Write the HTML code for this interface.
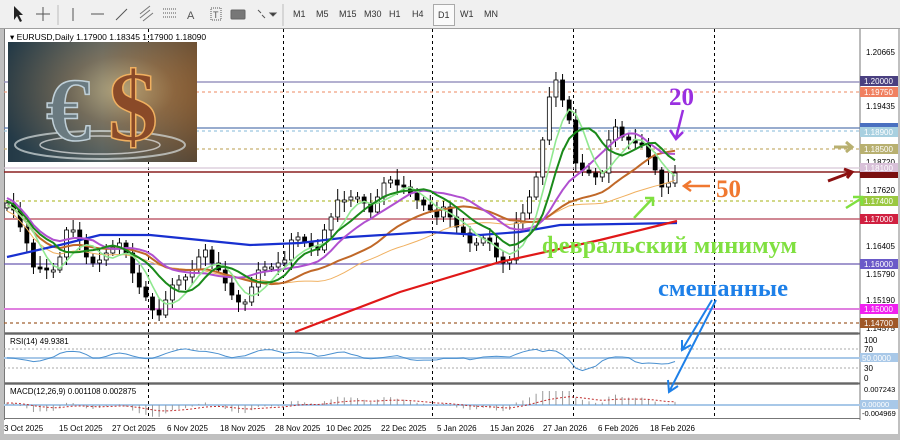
<!DOCTYPE html>
<html><head><meta charset="utf-8"><style>
body{margin:0;width:900px;height:440px;overflow:hidden;background:#c0c0c0;font-family:"Liberation Sans",sans-serif}
#tb{position:absolute;left:0;top:0;width:900px;height:28px;background:#f0f0f0;border-bottom:1px solid #a0a0a0}
.tf{position:absolute;top:9px;font-size:9px;color:#333}
svg{position:absolute;left:0;top:0}
</style></head><body>
<div id="tb">
<span class="tf" style="left:293px">M1</span><span class="tf" style="left:316px">M5</span><span class="tf" style="left:339px">M15</span><span class="tf" style="left:364px">M30</span><span class="tf" style="left:389px">H1</span><span class="tf" style="left:412px">H4</span>
<span class="tf" style="left:433px;top:4px;padding:5px 4px;border:1px solid #aaa;background:#fafafa">D1</span>
<span class="tf" style="left:460px">W1</span><span class="tf" style="left:484px">MN</span>
</div>
<svg width="900" height="440" id="s" xmlns="http://www.w3.org/2000/svg">
<defs>
<radialGradient id="g1" cx="0.6" cy="0.4" r="0.7"><stop offset="0" stop-color="#f5c070"/><stop offset="0.4" stop-color="#8a5a30"/><stop offset="1" stop-color="#1c2630"/></radialGradient>
<linearGradient id="g2" x1="0" x2="1"><stop offset="0" stop-color="#2a4c5c"/><stop offset="0.5" stop-color="#6a8a90"/><stop offset="1" stop-color="#9a6a38"/></linearGradient>
</defs>
<g stroke="#555" fill="none" stroke-width="1">
<path d="M14 6 L14 20 L17 16 L20 22 L22 21 L19 15 L23 15 Z" fill="#222" stroke="none"/>
<path d="M43 7v14M36 14h14"/>
<path d="M58 5v20" stroke="#bbb"/>
<path d="M73 8v13"/><path d="M91 14h13"/><path d="M116 20l11-11"/>
<path d="M140 18l10-8M140 14l10-8M143 21l10-8" stroke="#777"/>
<path d="M163 9h13M163 13h13M163 17h13" stroke-dasharray="1 1"/>
<path d="M211 8h10v12h-10z" stroke-dasharray="1 1"/>
<rect x="231" y="10" width="14" height="9" fill="#777" stroke="#666" rx="1"/>
<path d="M258 10l3 3M262 15l3 3"/><path d="M270 13l3 3l3-3z" fill="#333"/>
<path d="M283 4v22" stroke="#bbb"/>
</g>
<text x="187" y="19" font-size="11" fill="#555">A</text>
<text x="213" y="18" font-size="9" fill="#555">T</text>
<rect x="4" y="29" width="854" height="303" fill="#fff"/>
<rect x="858" y="29" width="40" height="405" fill="#fff"/>
<rect x="4" y="335" width="854" height="47" fill="#fff"/>
<rect x="4" y="385" width="854" height="33" fill="#fff"/>
<rect x="4" y="418" width="854" height="16" fill="#fff"/>
<line x1="860" y1="29" x2="860" y2="420" stroke="#777"/>
<line x1="4" y1="333.5" x2="860" y2="333.5" stroke="#666" stroke-width="2"/>
<line x1="4" y1="383.5" x2="860" y2="383.5" stroke="#666" stroke-width="2"/>
<line x1="4" y1="418.5" x2="860" y2="418.5" stroke="#777"/>
<line x1="4.5" y1="29" x2="4.5" y2="420" stroke="#777"/>
<rect x="0" y="434" width="900" height="6" fill="#c0c0c0"/>
<g stroke="#000" stroke-dasharray="3 3" stroke-width="1">
<path d="M148.5 29V418M283.5 29V418M432.5 29V418M573.5 29V418M714.5 29V418"/>
</g>
<g stroke-width="1.2">
<line x1="4" x2="860" y1="82" y2="82" stroke="#9a96c0" stroke-width="1.6"/>
<line x1="4" x2="860" y1="92" y2="92" stroke="#f0a080" stroke-dasharray="3 3"/>
<line x1="4" x2="860" y1="128" y2="128" stroke="#5a7ab0"/>
<line x1="4" x2="860" y1="131" y2="131" stroke="#9cc8e0" stroke-dasharray="3 3"/>
<line x1="4" x2="860" y1="149" y2="149" stroke="#c8b070" stroke-dasharray="3 3"/>
<line x1="4" x2="860" y1="168" y2="168" stroke="#d8c8d8"/>
<line x1="4" x2="860" y1="172" y2="172" stroke="#8b2020" stroke-width="1.4"/>
<line x1="4" x2="860" y1="201" y2="201" stroke="#b8c040" stroke-dasharray="3 3"/>
<line x1="4" x2="860" y1="219" y2="219" stroke="#c06070" stroke-width="1.4"/>
<line x1="4" x2="860" y1="264" y2="264" stroke="#6a5ab0"/>
<line x1="4" x2="860" y1="309" y2="309" stroke="#e080e0" stroke-width="2"/>
<line x1="4" x2="860" y1="323" y2="323" stroke="#a06030" stroke-dasharray="3 3"/>
</g>
<g id="candles"></g>
<g id="mas" fill="none"></g>
<rect x="8" y="42" width="189" height="120" fill="url(#g1)"/>
<rect x="8" y="42" width="189" height="120" fill="url(#g2)" opacity="0.5"/>
<ellipse cx="100" cy="145" rx="85" ry="14" fill="none" stroke="#d8e0e0" stroke-width="2" opacity="0.7"/>
<ellipse cx="100" cy="145" rx="60" ry="9" fill="none" stroke="#e8e8e8" stroke-width="1.5" opacity="0.7"/>
<text x="46" y="140" font-family="Liberation Serif,serif" font-size="90" font-weight="bold" fill="#6a7a80" stroke="#c0d0d8" stroke-width="1.5">€</text>
<text x="108" y="140" font-family="Liberation Serif,serif" font-size="100" font-weight="bold" fill="#8a4a28" stroke="#f0b060" stroke-width="1.5">$</text>
<text x="10" y="40" font-size="8.5" fill="#000">▾ EURUSD,Daily  1.17900 1.18345 1.17900 1.18090</text>
<g font-size="8" fill="#000">
<text x="866" y="55">1.20665</text><text x="866" y="109">1.19435</text><text x="866" y="136">1.18635</text>
<text x="866" y="165">1.18720</text><text x="866" y="193">1.17620</text><text x="866" y="249">1.16405</text>
<text x="866" y="277">1.15790</text><text x="866" y="303">1.15190</text><text x="866" y="331">1.14575</text>
</g>
<g font-size="8" fill="#fff">
<rect x="860" y="76" width="38" height="10" fill="#4a4080"/><text x="864" y="84">1.20000</text>
<rect x="860" y="87" width="38" height="10" fill="#f08060"/><text x="864" y="95">1.19750</text>
<rect x="860" y="123" width="38" height="9" fill="#4a70c0"/>
<rect x="860" y="127" width="38" height="10" fill="#a8d0e0"/><text x="864" y="135">1.18900</text>
<rect x="860" y="144" width="38" height="10" fill="#b8b070"/><text x="864" y="152">1.18500</text>
<rect x="860" y="163" width="38" height="10" fill="#d8c0d8"/><text x="864" y="171">1.18100</text>
<rect x="860" y="172" width="38" height="6" fill="#7a1010"/>
<rect x="860" y="196" width="38" height="10" fill="#9ac840"/><text x="864" y="204">1.17400</text>
<rect x="860" y="214" width="38" height="10" fill="#d02040"/><text x="864" y="222">1.17000</text>
<rect x="860" y="259" width="38" height="10" fill="#6a5ac8"/><text x="864" y="267">1.16000</text>
<rect x="860" y="304" width="38" height="10" fill="#f020f0"/><text x="864" y="312">1.15000</text>
<rect x="860" y="318" width="38" height="10" fill="#a05828"/><text x="864" y="326">1.14700</text>
</g>
<line x1="4" x2="860" y1="349" y2="349" stroke="#aaa" stroke-dasharray="2 2"/>
<line x1="4" x2="860" y1="358" y2="358" stroke="#a8c8e8" stroke-width="2"/>
<line x1="4" x2="860" y1="368" y2="368" stroke="#aaa" stroke-dasharray="2 2"/>
<text x="10" y="344" font-size="8">RSI(14) 49.9381</text>
<polyline id="rsi" fill="none" stroke="#4a90d0" stroke-width="1"/>
<g font-size="8"><text x="864" y="343">100</text><text x="864" y="352">70</text><text x="864" y="371">30</text><text x="864" y="381">0</text>
<rect x="860" y="353" width="38" height="9" fill="#a8c8e8"/><text x="862" y="361" fill="#fff">50.0000</text></g>
<line x1="4" x2="860" y1="405" y2="405" stroke="#a8c8e8" stroke-width="2"/>
<text x="10" y="394" font-size="8">MACD(12,26,9) 0.001108 0.002875</text>
<g id="hist" stroke="#999"></g>
<polyline id="sig" fill="none" stroke="#c03030" stroke-dasharray="2 2"/>
<g font-size="7.5"><text x="864" y="392">0.007243</text><rect x="860" y="400" width="38" height="9" fill="#a8c8e8"/><text x="862" y="407" fill="#fff">0.00000</text><text x="862" y="416">-0.004969</text></g>
<g font-size="8">
<text x="4" y="431">3 Oct 2025</text><text x="59" y="431">15 Oct 2025</text><text x="112" y="431">27 Oct 2025</text>
<text x="167" y="431">6 Nov 2025</text><text x="220" y="431">18 Nov 2025</text><text x="275" y="431">28 Nov 2025</text>
<text x="326" y="431">10 Dec 2025</text><text x="381" y="431">22 Dec 2025</text><text x="437" y="431">5 Jan 2026</text>
<text x="490" y="431">15 Jan 2026</text><text x="543" y="431">27 Jan 2026</text><text x="598" y="431">6 Feb 2026</text><text x="650" y="431">18 Feb 2026</text>
</g>
<g font-family="Liberation Serif,serif" font-weight="bold">
<text x="669" y="105" font-size="25" fill="#9a30e0">20</text>
<text x="716" y="197" font-size="25" fill="#f07830">50</text>
<text x="542" y="253" font-size="24" fill="#80e040" textLength="255" lengthAdjust="spacingAndGlyphs">февральский минимум</text>
<text x="658" y="296" font-size="24" fill="#1e80e8" textLength="130" lengthAdjust="spacingAndGlyphs">смешанные</text>
</g>
<g stroke-width="2.5" fill="none">
<path d="M683 110L676 138M670 130l6 9l7-7" stroke="#9a30e0"/>
<path d="M710 186H684M691 181l-7 5l7 5" stroke="#f07830"/>
<path d="M634 218L653 198M645 198l8 0l0 8" stroke="#80e040"/>
<path d="M846 208L862 198M853 197h9v8" stroke="#80e040"/>
<path d="M834 147h18M846 142l6 5l-6 5" stroke="#b8b070" stroke-width="3"/>
<path d="M828 181L852 172M844 169l8 3l-5 6" stroke="#8b1010" stroke-width="3"/>
<path d="M712 300L682 350M682 340v10l9-5" stroke="#1e80e8" stroke-width="2"/>
<path d="M716 300L669 392M668 380l1 12l9-6" stroke="#1e80e8" stroke-width="2"/>
</g>
</svg>
<script>
var C=[203,210,227,243,267,268,270,270,257,230,230,240,257,263,260,253,247,243,253,273,287,297,310,315,300,285,280,277,270,257,250,263,270,283,295,302,302,287,270,267,267,263,260,240,237,243,247,250,230,217,200,200,197,197,203,212,197,183,180,185,187,193,200,205,210,217,207,217,227,233,243,243,238,243,257,263,260,223,213,197,177,140,97,80,100,120,163,170,173,177,173,140,127,137,140,143,145,157,170,187,183,173];
var n=C.length,x0=7,dx=(675-7)/(n-1),cg=document.getElementById('candles'),s='';
function X(i){return x0+i*dx}
for(var i=0;i<n;i++){var o=i?C[i-1]:C[0]+5,c=C[i],x=X(i);var t=Math.min(o,c),b=Math.max(o,c);if(b-t<2){b=t+2}
var hi=t-3-(i*7%9),lo=b+3+(i*5%8);
s+='<line x1="'+x+'" x2="'+x+'" y1="'+hi+'" y2="'+lo+'" stroke="#000"/>';
s+='<rect x="'+(x-2)+'" y="'+t+'" width="4" height="'+(b-t)+'" fill="'+(c>o?'#000':'#fff')+'" stroke="#000" stroke-width="0.8"/>';}
cg.innerHTML=s;
function sma(p,off){var pts=[];for(var i=0;i<n;i++){var a=0,k=0;for(var j=Math.max(0,i-p+1);j<=i;j++){a+=C[j];k++}pts.push(X(i)+','+(a/k+off))}return pts.join(' ')}
var m='';
m+='<polyline points="'+sma(30,8)+'" stroke="#f0b060" stroke-width="1"/>';
m+='<polyline points="'+sma(22,2)+'" stroke="#c06828" stroke-width="2"/>';
m+='<polyline points="7,257 60,245 100,235 150,235 200,240 250,245 300,243 350,237 430,232 480,235 520,232 560,225 620,224 677,223" stroke="#1830d0" stroke-width="2.2"/>';
m+='<polyline points="295,332 400,292 500,262 600,240 677,221" stroke="#e01818" stroke-width="2.2"/>';
m+='<polyline points="'+sma(14,-5)+'" stroke="#b050d0" stroke-width="2"/>';
m+='<polyline points="'+sma(5,2)+'" stroke="#90e890" stroke-width="1.6"/>';
m+='<polyline points="'+sma(8,-2)+'" stroke="#1a8a1a" stroke-width="2"/>';
document.getElementById('mas').innerHTML=m;
var r=[],h='',sg=[];
for(var i=0;i<n;i++){var v=358+(200-C[i])*0.06+(i>0?(C[i]-C[Math.max(0,i-4)])*0.12:0);v=Math.max(342,Math.min(373,v));r.push(X(i)+','+v);
var a=0,k=0;for(var j=Math.max(0,i-12);j<=i;j++){a+=C[j];k++}var hv=(a/k-C[i])*0.12+(235-C[i])*0.08;hv=Math.max(-12,Math.min(14,hv));
h+='<line x1="'+X(i)+'" x2="'+X(i)+'" y1="405" y2="'+(405-hv)+'"/>';
sg.push(X(i)+','+(405-hv*0.8));}
document.getElementById('rsi').setAttribute('points',r.join(' '));
document.getElementById('hist').innerHTML=h;
var ss=[],acc=0;for(var i=0;i<n;i++){var p=sg[i].split(',');acc=i?acc*0.8+parseFloat(p[1])*0.2:parseFloat(p[1]);ss.push(p[0]+','+acc)}
document.getElementById('sig').setAttribute('points',ss.join(' '));
</script>
</body></html>
